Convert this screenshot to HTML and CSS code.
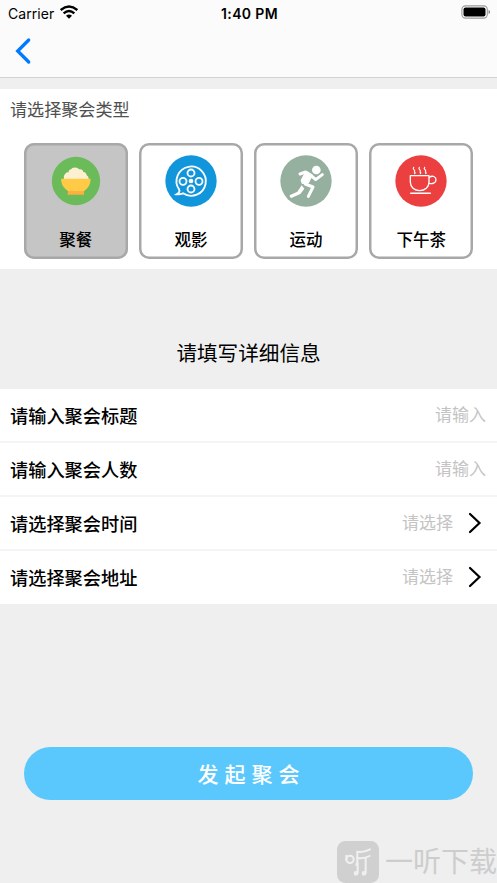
FILE: index.html
```html
<!DOCTYPE html>
<html lang="zh-CN">
<head>
<meta charset="utf-8">
<title>发起聚会</title>
<link rel="stylesheet" href="styles.css">
</head>
<body>
<div class="screen">
  <header class="header">
    <div class="status">
      <div class="carrier">
        <span>Carrier</span>
        <svg class="wifi" width="18" height="14" viewBox="0 0 54 42">
          <g fill="none" stroke="#000" stroke-width="7.500"><path d="M2 15Q27-6 52 15"/><path d="M11 25Q27 11 43 25"/></g>
          <path d="M18 32.500Q27 25 36 32.500L27 41Z"/>
        </svg>
      </div>
      <span class="time">1:40 PM</span>
      <svg class="battery" width="30" height="14" viewBox="0 0 30 14">
        <rect x=".9" y=".9" width="25.400" height="12.200" rx="3.600" fill="#fff" stroke="#999" stroke-width="1.100"/>
        <rect x="2.500" y="2.500" width="22" height="9" rx="2"/>
        <path d="M27.600 5Q29 5.500 29 7T27.600 9Z" fill="#777"/>
      </svg>
    </div>
    <nav class="nav">
      <svg width="18" height="28" viewBox="0 0 18 28"><path d="M14.700 3L3.700 14L14.700 25" fill="none" stroke="#007aff" stroke-width="3.300" stroke-linecap="round" stroke-linejoin="miter"/></svg>
    </nav>
  </header>

  <section class="types">
    <h2 class="types-title">请选择聚会类型</h2>
    <div class="cards">
      <div class="card selected">
        <svg class="icon" viewBox="105 58 156 156">
          <circle cx="183" cy="136" r="72.500" fill="#6cbb5a"/>
          <path d="M147 131Q145 119 151 114Q154 109 161 110Q160 103 168 101Q172 95 180 96Q188 95 192 101Q203 99 205 109Q214 110 215 119Q222 122 221 131Z" fill="#fdf0d0"/>
          <path d="M138 129H227Q226 149 215 159Q210 165 204 167H161Q155 164 151 159Q139 149 138 129Z" fill="#ffcb46"/>
          <path d="M159 166H207V177H157Q159 174 159 166Z" fill="#fbb040"/>
        </svg>
        <span>聚餐</span>
      </div>
      <div class="card">
        <svg class="icon" viewBox="105 58 156 156">
          <circle cx="183" cy="136" r="77" fill="#1296db"/>
          <g fill="none" stroke="#fff" stroke-width="5.500" stroke-linecap="round">
            <path d="M140 176Q150 177 159 173A44 44 0 1 0 147 161Q152 169 140 176Z"/>
            <circle cx="183" cy="112" r="10.500"/><circle cx="183" cy="160" r="10.500"/>
            <circle cx="159" cy="137" r="10.500"/><circle cx="207" cy="137" r="10.500"/>
          </g>
          <circle cx="183" cy="136" r="7" fill="#fff"/>
        </svg>
        <span>观影</span>
      </div>
      <div class="card">
        <svg class="icon" viewBox="105 58 156 156">
          <circle cx="183" cy="136" r="77" fill="#96b09f"/>
          <circle cx="214" cy="103" r="13" fill="#fff"/>
          <path d="M183 108L201 119L190 141L172 143L169 134Z" fill="#fff" stroke="#fff" stroke-width="4" stroke-linejoin="round"/>
          <g fill="none" stroke="#fff" stroke-width="9" stroke-linecap="round" stroke-linejoin="round">
            <path d="M165 115L182 109L198 119L212 132L232 117"/>
            <path d="M176 136L181 145L204 154L190 182"/>
          </g>
          <path d="M170 149L178 159L166 175L139 187Q133 186 134 179L157 168Z" fill="#fff"/>
        </svg>
        <span>运动</span>
      </div>
      <div class="card">
        <svg class="icon" viewBox="99 58 156 156">
          <circle cx="177" cy="136" r="77" fill="#ec3f40"/>
          <g fill="none" stroke="#fff" stroke-width="4" stroke-linecap="round" stroke-linejoin="round">
            <path d="M145 120H201V139C201 155 189 165 173 165S145 155 145 139Z"/>
            <path d="M202 125C211 118 222 123 222 132C222 142 211 146 201 143"/>
            <path d="M146 173H205" stroke-width="4.500"/>
            <path d="M155 95Q152 99 156 102T157 109Q161 111 158 114M172 95Q169 99 173 102T174 109Q178 111 175 114M188 95Q185 99 189 102T190 109Q194 111 191 114" stroke-width="3.500"/>
          </g>
        </svg>
        <span>下午茶</span>
      </div>
    </div>
  </section>

  <h1 class="form-title">请填写详细信息</h1>

  <section class="form">
    <div class="row"><span class="label">请输入聚会标题</span><span class="value">请输入</span></div>
    <div class="row"><span class="label">请输入聚会人数</span><span class="value">请输入</span></div>
    <div class="row"><span class="label">请选择聚会时间</span><span class="value">请选择</span>
      <svg class="arrow" viewBox="0 0 14 22"><path d="M2 2L11.500 11L2 20" fill="none" stroke="#000" stroke-width="2.200" stroke-linecap="round"/></svg></div>
    <div class="row"><span class="label">请选择聚会地址</span><span class="value">请选择</span>
      <svg class="arrow" viewBox="0 0 14 22"><path d="M2 2L11.500 11L2 20" fill="none" stroke="#000" stroke-width="2.200" stroke-linecap="round"/></svg></div>
  </section>

  <button class="submit">发起聚会</button>

  <footer class="brand">
    <svg width="42" height="42" viewBox="0 0 126 126">
      <rect width="126" height="126" rx="25" fill="#d0d0d0"/>
      <g fill="none" stroke="#f0f0f0" stroke-width="6" stroke-linecap="round">
        <circle cx="39" cy="55" r="11"/>
        <path d="M28 44V57"/>
        <path d="M99 25Q82 35 61 32V60Q61 66 58 72"/>
        <path d="M61 51Q82 54 98 45"/>
        <path d="M62 66V96M86 52V96"/>
        <circle cx="57" cy="97" r="4"/><circle cx="81" cy="97" r="4"/>
      </g>
    </svg>
    <span>一听下载</span>
  </footer>
</div>
</body>
</html>
```
FILE: styles.css
```css
* { box-sizing: border-box; }
body {
  margin: 0;
  background: #efefef;
  color: #000;
  font-family: Inter, "Noto Sans CJK SC", sans-serif;
}
h1, h2 { margin: 0; font-weight: 400; }
svg { display: block; flex: none; }
.screen {
  display: flex;
  flex-direction: column;
  height: 883px;
  overflow: hidden;
}
.header {
  flex: none;
  height: 78px;
  background: #fbfbfb;
  border-bottom: 1px solid #d2d2d2;
}
.status {
  display: grid;
  grid-template-columns: 1fr auto 1fr;
  align-items: center;
  height: 26px;
  padding: 0 6px 0 8px;
  font-size: 14px;
}
.carrier { display: flex; align-items: center; gap: 6px; letter-spacing: .05px; }
.wifi { margin-top: -2px; }
.time { font-weight: 600; letter-spacing: .35px; }
.battery { justify-self: end; margin-top: -2px; }
.nav { padding: 11px 0 0 14px; }
.types {
  flex: none;
  height: 180px;
  margin-top: 11px;
  background: #fff;
}
.types-title {
  height: 54px;
  padding-left: 10px;
  font-size: 17.100px;
  line-height: 41px;
  color: #505050;
}
.cards {
  display: grid;
  grid-template-columns: repeat(4, 1fr);
  gap: 11.600px;
  padding: 0 24px;
}
.card {
  display: flex;
  flex-direction: column;
  align-items: center;
  height: 116px;
  padding-top: 11.500px;
  border-radius: 10px;
  box-shadow: inset 0 0 0 2.500px #a8a8a8;
  font-size: 16.500px;
  font-weight: 500;
  line-height: 24px;
}
.card.selected { background: #c5c5c5; }
.icon { width: 52px; height: 52px; margin-bottom: 21.500px; }
.form-title {
  flex: none;
  height: 120px;
  padding-top: 70px;
  font-size: 20.600px;
  line-height: 30px;
  text-align: center;
}
.form { flex: none; background: #fff; }
.row {
  display: flex;
  align-items: center;
  height: 54px;
  padding: 0 11px 0 10px;
  border-bottom: 2px solid #f4f4f4;
}
.row:last-child { height: 52.500px; border-bottom: 0; }
.label { font-size: 18.200px; font-weight: 500; }
.value { margin-left: auto; padding-bottom: 3px; font-size: 17px; color: #c4c4c4; }
.arrow { width: 14px; height: 22px; margin: 0 4px 0 15px; }
.submit {
  flex: none;
  height: 53px;
  margin: 143.500px 24px 0;
  padding: 0 0 2px 6px;
  border: 0;
  border-radius: 27px;
  background: #5ac8fc;
  color: #fff;
  font: 500 21px "Noto Sans CJK SC", sans-serif;
  letter-spacing: 6px;
}
.brand {
  display: flex;
  align-items: center;
  gap: 6px;
  margin: 41px 0 0 337px;
  white-space: nowrap;
  font-size: 28px;
  line-height: 42px;
  color: #cdcdcd;
}
```
